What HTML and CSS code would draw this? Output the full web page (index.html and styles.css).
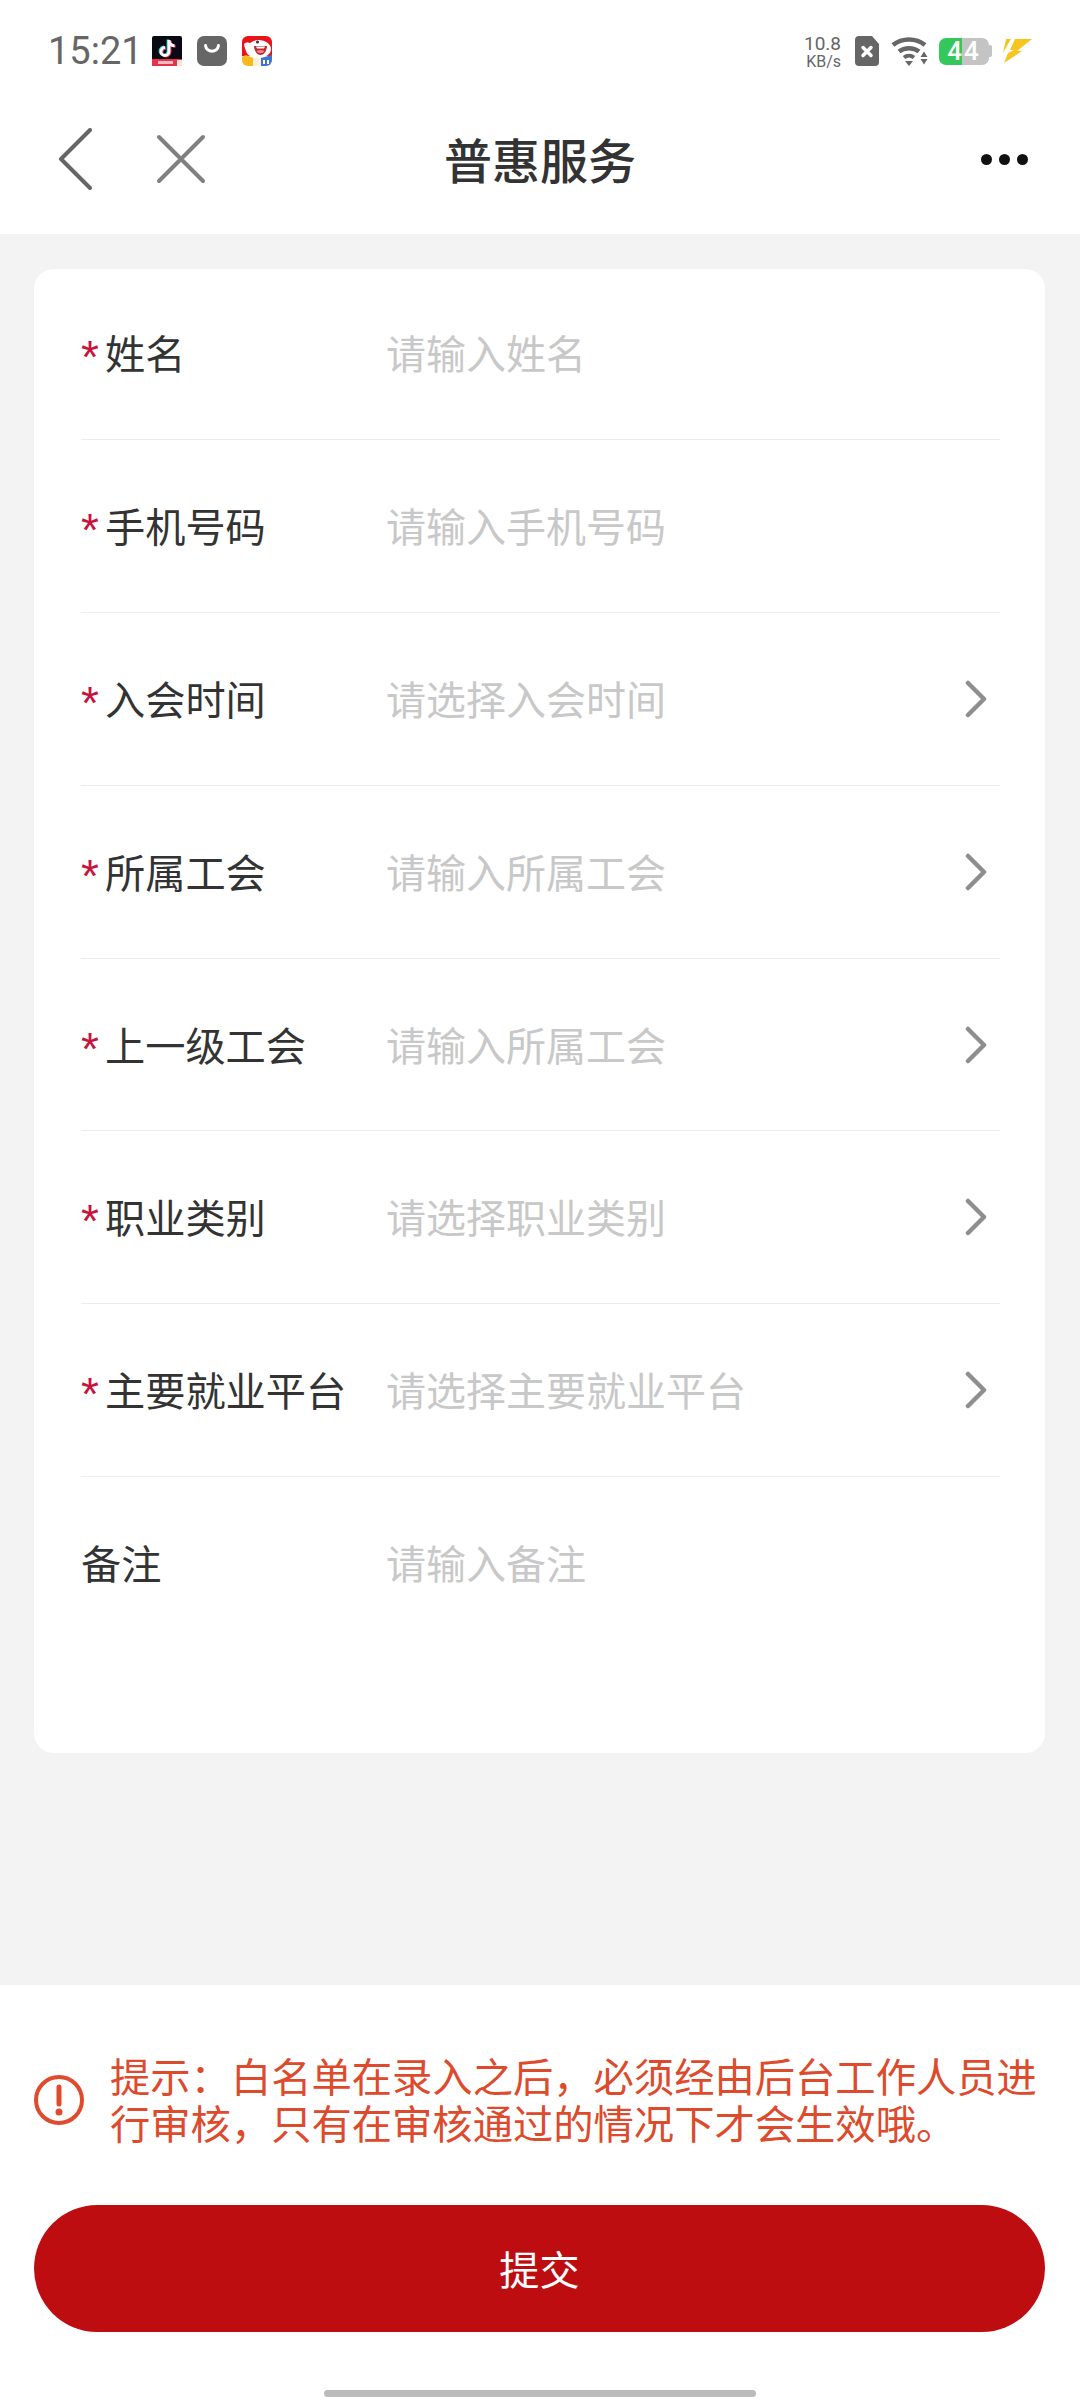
FILE: index.html
```html
<!DOCTYPE html>
<html lang="zh-CN">
<head>
    <meta charset="UTF-8">
    <meta name="viewport" content="width=device-width, initial-scale=1.0">
    <title>普惠服务</title>
    <link rel="stylesheet" href="styles.css">
</head>
<body>
    <div class="page">
        <!-- Status bar -->
        <div class="status-bar">
            <div class="status-left">
                <span class="time">15:21</span>
                <svg class="app-icon" viewBox="0 0 30 30">
                    <rect width="30" height="30" rx="2" fill="#0a0a14"/>
                    <rect y="23" width="30" height="7" fill="#e8324a"/>
                    <rect x="6" y="25" width="15" height="3" fill="#f6b9c2"/>
                    <rect x="25" y="24" width="5" height="6" fill="#fde4d8"/>
                    <path d="M16 3.5v11.500a4 4 0 1 1-4-4M16 4c.4 3 2.5 5 5.5 5.3" fill="none" stroke="#2fd6d8" stroke-width="2.8"/>
                    <path d="M18 4.5v11.500a4 4 0 1 1-4-4M18 5c.4 3 2.5 5 5.5 5.3" fill="none" stroke="#f0345a" stroke-width="2.8"/>
                    <path d="M17 4v11.500a4 4 0 1 1-4-4M17 4.5c.4 3 2.5 5 5.5 5.3" fill="none" stroke="#fff" stroke-width="2.8"/>
                </svg>
                <svg class="app-icon" viewBox="0 0 30 30">
                    <rect width="30" height="30" rx="7" fill="#666"/>
                    <path d="M8.5 9.5c1 7.5 12 7.5 13 0" fill="none" stroke="#fff" stroke-width="3" stroke-linecap="round"/>
                </svg>
                <svg class="app-icon" viewBox="0 0 30 30">
                    <rect width="30" height="30" rx="6" fill="#f4f4f4"/>
                    <path d="M0 6a6 6 0 0 1 6-6h18a6 6 0 0 1 6 6v14H0z" fill="#e8141c"/>
                    <ellipse cx="17" cy="13" rx="12" ry="9" fill="#fff"/>
                    <path d="M2 8c4-3 7-1 8 3l-1 9c-3 1-6-6-7-12z" fill="#fff"/>
                    <path d="M12 10h13c-.5 6-3.5 9-6.5 9S12.5 16 12 10z" fill="#b8282c"/>
                    <path d="M14.5 15c2.5-1.5 5.5-1.5 8 0-1.5 3-6.5 3-8 0z" fill="#f2808a"/>
                    <path d="M14 10.5h9l-1 2h-7z" fill="#fff"/>
                    <rect x="14" y="4.5" width="3" height="3" rx="1.5" fill="#333"/>
                    <path d="M0 21l4-2 7 3v8H6a6 6 0 0 1-6-6z" fill="#f8b91c"/>
                    <rect x="11" y="22" width="8" height="8" fill="#fdf0d8"/>
                    <path d="M19 22l11-3v5a6 6 0 0 1-6 6h-5z" fill="#3d74d0"/>
                    <path d="M21 24h2v4h-2zM25 24h2v4h-2z" fill="#fff"/>
                </svg>
            </div>
            <div class="status-right">
                <div class="net-speed">
                    <span class="net-value">10.8</span>
                    <span class="net-unit">KB/s</span>
                </div>
                <svg class="sim-icon" viewBox="0 0 24 30">
                    <path d="M4 0h13l7 8v18a4 4 0 0 1-4 4H4a4 4 0 0 1-4-4V4a4 4 0 0 1 4-4z" fill="#666"/>
                    <path d="M8 11.5l8 8M16 11.5l-8 8" stroke="#fff" stroke-width="3.5" stroke-linecap="round"/>
                </svg>
                <svg class="wifi-icon" viewBox="0 0 37 30">
                    <path d="M2 9c9-7.5 23-7.5 32 0" fill="none" stroke="#666" stroke-width="4.5"/>
                    <path d="M8 15.5c5.500-4.500 14.500-4.500 20 0" fill="none" stroke="#666" stroke-width="4.5"/>
                    <path d="M13 21.5c3-2.5 7-2.5 10 0" fill="none" stroke="#666" stroke-width="4"/>
                    <path d="M14 25h8l-4 5z" fill="#666"/>
                    <path d="M33 15.5l3.5 5.5h-7zM29.5 23h7L33 28.5z" fill="#666"/>
                </svg>
                <div class="battery">
                    <div class="battery-body">44</div>
                    <div class="battery-tip"></div>
                </div>
                <svg class="bolt-icon" viewBox="0 0 30 26">
                    <path d="M4 1h5L1 15z" fill="#f6c51e"/>
                    <path d="M13 1h17L15 13h5L2 25l4-10 6-3H8z" fill="#f6c51e"/>
                </svg>
            </div>
        </div>

        <!-- Title bar -->
        <div class="nav-bar">
            <div class="nav-left">
                <svg class="back-icon" viewBox="0 0 34 62">
                    <path d="M32 2L3 31l29 29" fill="none" stroke="#666" stroke-width="4" stroke-linecap="round" stroke-linejoin="round"/>
                </svg>
                <svg class="close-icon" viewBox="0 0 50 50">
                    <path d="M3 3l44 44M47 3L3 47" fill="none" stroke="#808080" stroke-width="4" stroke-linecap="round"/>
                </svg>
            </div>
            <div class="nav-title">普惠服务</div>
            <div class="nav-right">
                <span class="dot"></span>
                <span class="dot"></span>
                <span class="dot"></span>
            </div>
        </div>

        <!-- Form -->
        <div class="content">
            <div class="card">
                <div class="row">
                    <div class="label"><span class="star">*</span>姓名</div>
                    <div class="placeholder">请输入姓名</div>
                </div>
                <div class="row">
                    <div class="label"><span class="star">*</span>手机号码</div>
                    <div class="placeholder">请输入手机号码</div>
                </div>
                <div class="row">
                    <div class="label"><span class="star">*</span>入会时间</div>
                    <div class="placeholder">请选择入会时间</div>
                    <svg class="arrow" viewBox="0 0 24 38"><path d="M3 3l16 16L3 35" fill="none" stroke="#8e8e8e" stroke-width="4.5" stroke-linecap="round" stroke-linejoin="round"/></svg>
                </div>
                <div class="row">
                    <div class="label"><span class="star">*</span>所属工会</div>
                    <div class="placeholder">请输入所属工会</div>
                    <svg class="arrow" viewBox="0 0 24 38"><path d="M3 3l16 16L3 35" fill="none" stroke="#8e8e8e" stroke-width="4.5" stroke-linecap="round" stroke-linejoin="round"/></svg>
                </div>
                <div class="row">
                    <div class="label"><span class="star">*</span>上一级工会</div>
                    <div class="placeholder">请输入所属工会</div>
                    <svg class="arrow" viewBox="0 0 24 38"><path d="M3 3l16 16L3 35" fill="none" stroke="#8e8e8e" stroke-width="4.5" stroke-linecap="round" stroke-linejoin="round"/></svg>
                </div>
                <div class="row">
                    <div class="label"><span class="star">*</span>职业类别</div>
                    <div class="placeholder">请选择职业类别</div>
                    <svg class="arrow" viewBox="0 0 24 38"><path d="M3 3l16 16L3 35" fill="none" stroke="#8e8e8e" stroke-width="4.5" stroke-linecap="round" stroke-linejoin="round"/></svg>
                </div>
                <div class="row">
                    <div class="label"><span class="star">*</span>主要就业平台</div>
                    <div class="placeholder">请选择主要就业平台</div>
                    <svg class="arrow" viewBox="0 0 24 38"><path d="M3 3l16 16L3 35" fill="none" stroke="#8e8e8e" stroke-width="4.5" stroke-linecap="round" stroke-linejoin="round"/></svg>
                </div>
                <div class="row row-last">
                    <div class="label">备注</div>
                    <div class="placeholder">请输入备注</div>
                </div>
            </div>
        </div>

        <!-- Footer -->
        <div class="footer">
            <div class="tip">
                <svg class="tip-icon" viewBox="0 0 50 50">
                    <circle cx="25" cy="25" r="23" fill="none" stroke="#e04a2d" stroke-width="4"/>
                    <path d="M25 12v17" stroke="#e04a2d" stroke-width="5" stroke-linecap="round"/>
                    <circle cx="25" cy="37" r="3.5" fill="#e04a2d"/>
                </svg>
                <div class="tip-text">提示：白名单在录入之后，必须经由后台工作人员进行审核，只有在审核通过的情况下才会生效哦。</div>
            </div>
            <button class="submit-btn">提交</button>
            <div class="home-bar"></div>
        </div>
    </div>
</body>
</html>
```

FILE: styles.css
```css
* { box-sizing: border-box; }
body { margin: 0; background: #f3f3f3; font-family: "Noto Sans CJK SC", "Noto Sans", sans-serif; }
.page { width: 1080px; height: 2400px; display: flex; flex-direction: column; overflow: hidden; }

/* status bar */
.status-bar { height: 84px; padding: 18px 48px 0; background: #fff; display: flex; justify-content: space-between; align-items: center; }
.status-left { display: flex; align-items: center; }
.time { width: 104px; font-family: Roboto, sans-serif; font-size: 38px; color: #666; line-height: 44px; }
.app-icon { width: 30px; height: 30px; margin-right: 15px; }
.status-right { display: flex; align-items: center; }
.net-speed { margin-right: 14px; display: flex; flex-direction: column; align-items: flex-end; font-family: Roboto, sans-serif; color: #666; }
.net-value { font-size: 19px; line-height: 20px; }
.net-unit { font-size: 16px; line-height: 15px; }
.sim-icon { width: 24px; height: 30px; margin-right: 12px; }
.wifi-icon { width: 37px; height: 30px; margin-right: 11px; }
.battery { display: flex; align-items: center; margin-right: 10px; }
.battery-body { width: 50px; height: 27px; border-radius: 7px; background: linear-gradient(90deg, #34c759 23px, #c4c4c4 23px); text-align: center; font-family: Roboto, sans-serif; font-weight: 500; font-size: 26px; letter-spacing: 2px; line-height: 27px; color: #fff; }
.battery-tip { width: 3px; height: 12px; border-radius: 0 2px 2px 0; background: #c4c4c4; }
.bolt-icon { width: 30px; height: 26px; }

/* title bar */
.nav-bar { height: 150px; padding: 0 52px; background: #fff; display: grid; grid-template-columns: 1fr auto 1fr; align-items: center; }
.nav-left { display: flex; align-items: center; margin-left: 6px; }
.back-icon { width: 34px; height: 62px; margin-right: 64px; }
.close-icon { width: 50px; height: 50px; }
.nav-title { font-size: 48px; font-weight: 500; color: #333; line-height: 60px; margin-top: -3px; }
.nav-right { display: flex; justify-content: flex-end; gap: 7px; }
.dot { width: 11px; height: 11px; border-radius: 50%; background: #111; }

/* form card */
.content { flex: 1; padding: 35px 35px 0 34px; }
.card { background: #fff; border-radius: 20px; height: 1484px; padding: 0 45px 0 47px; }
.row { height: 172.85px; padding-top: 63px; border-bottom: 1px solid #ececec; display: flex; align-items: flex-start; font-size: 40.2px; line-height: 44px; position: relative; }
.row:first-child { height: 171px; padding-top: 61px; }
.row-last { border-bottom: none; }
.label { width: 305px; color: #333; }
.star { display: inline-block; width: 24px; font-family: "Liberation Sans", sans-serif; font-size: 46px; line-height: 0; vertical-align: -4px; color: #c8143c; }
.placeholder { font-size: 40px; color: #c8c8c8; }
.arrow { position: absolute; right: 11px; top: 67px; width: 24px; height: 38px; }

/* footer */
.footer { height: 415px; padding: 66px 35px 0 34px; background: #fff; }
.tip { display: flex; align-items: flex-start; }
.tip-icon { width: 50px; height: 50px; margin: 24px 26px 0 0; flex-shrink: 0; }
.tip-text { font-size: 40.3px; line-height: 47px; color: #dd4a2c; }
.submit-btn { display: block; width: 100%; height: 127px; margin-top: 60px; padding-bottom: 4px; border: none; border-radius: 64px; background: #bd0d10; color: #fff; font-family: inherit; font-size: 40.2px; }
.home-bar { width: 432px; height: 7px; margin: 58px auto 0; border-radius: 4px; background: #bbb; }
```
